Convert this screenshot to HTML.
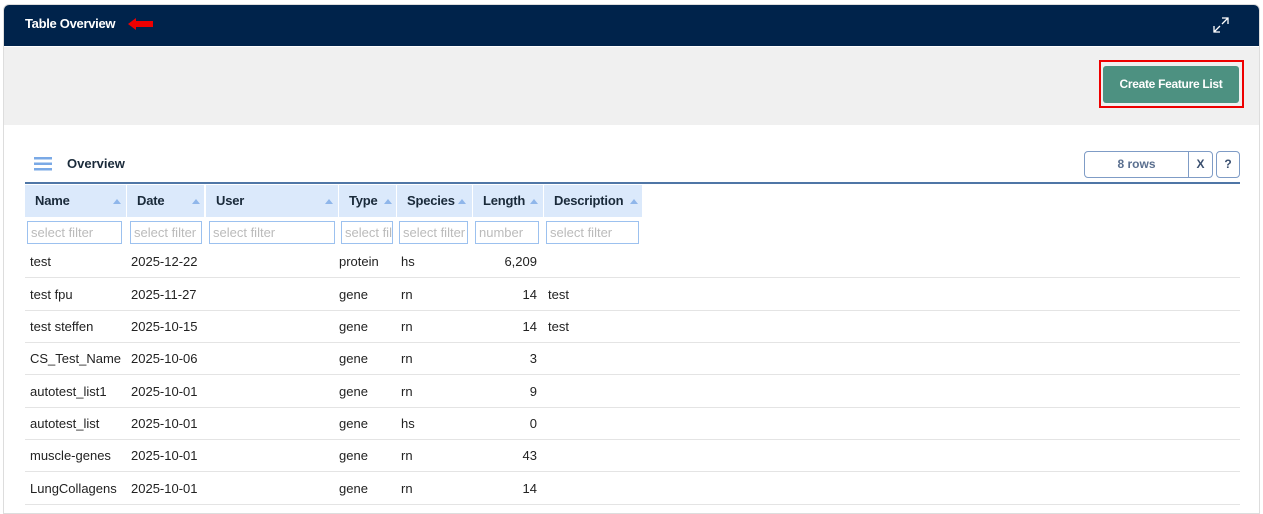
<!DOCTYPE html>
<html><head><style>
*{box-sizing:border-box;margin:0;padding:0}
body{width:1263px;height:509px;background:#fff;font-family:"Liberation Sans",sans-serif;position:relative;overflow:hidden;color:#222}
.card{position:absolute;left:3px;top:4px;width:1257px;height:510px;border:1px solid #ddd;border-radius:6px 6px 0 0;overflow:hidden;background:#fff}
.hdr{position:absolute;left:0;top:0;width:100%;height:41px;background:#00234b}
.title{position:absolute;left:21px;top:11px;color:#fff;font-weight:bold;font-size:13px;letter-spacing:-0.3px}
.gray{position:absolute;left:0;top:42px;width:100%;height:78px;background:#f0f0f0}
.btn{position:absolute;left:1103px;top:66px;width:136px;height:37px;background:#4d9181;border-radius:3px;color:#fff;font-weight:bold;font-size:12px;text-align:center;line-height:37px;letter-spacing:-0.3px}
.redbox{position:absolute;left:1099px;top:60px;width:145px;height:48px;border:2px solid #e00}
.abs{position:absolute}
.th{position:absolute;top:185px;height:32px;background:#dbe9fb;font-weight:bold;font-size:13px;line-height:32px;padding-left:10px;color:#1a2a3a;letter-spacing:-0.2px}
.tri{position:absolute;top:14px;width:0;height:0;border-left:4px solid transparent;border-right:4px solid transparent;border-bottom:5px solid #8fb6ea}
.fi{position:absolute;top:221px;height:23px;border:1px solid #9cc1ef;color:#bbb;font-size:13px;line-height:21px;padding-left:3px;overflow:hidden;white-space:nowrap;background:#fff}
.row{position:absolute;left:25px;width:1215px;height:32px;border-bottom:1px solid #e4e4e4;font-size:13px}
.row span{position:absolute;top:8px;white-space:nowrap}
</style></head><body>
<div class="card">
<div class="hdr"></div>
<div class="title">Table Overview</div>
<svg class="abs" style="left:124px;top:13px" width="26" height="12"><polygon points="0,6 8,0 8,3 25,3 25,9 8,9 8,12" fill="#e00"/></svg>
<svg class="abs" style="left:1208px;top:11px" width="18" height="18" fill="none" stroke="#fff" stroke-width="1.3"><path d="M10 2H16V8M16 2L10 8M8 16H2V10M2 16L8 10"/></svg>
<div class="gray"></div>
</div>
<div class="btn">Create Feature List</div>
<div class="redbox"></div>
<svg class="abs" style="left:34px;top:157px" width="18" height="14"><rect y="0" width="18" height="2.5" fill="#7aa9e6"/><rect y="5.5" width="18" height="2.5" fill="#7aa9e6"/><rect y="11" width="18" height="2.5" fill="#7aa9e6"/></svg>
<div class="abs" style="left:67px;top:156px;font-weight:bold;font-size:13px;color:#1a2a3a">Overview</div>
<div class="abs" style="left:1084px;top:151px;width:105px;height:27px;border:1px solid #7f9cc6;border-radius:4px 0 0 4px;text-align:center;line-height:25px;font-size:12px;font-weight:bold;color:#5a6f8f">8 rows</div>
<div class="abs" style="left:1188px;top:151px;width:25px;height:27px;border:1px solid #7f9cc6;border-radius:0 4px 4px 0;text-align:center;line-height:25px;font-size:12px;font-weight:bold;color:#3a4f6f">X</div>
<div class="abs" style="left:1216px;top:151px;width:24px;height:27px;border:1px solid #7f9cc6;border-radius:4px;text-align:center;line-height:25px;font-size:12px;font-weight:bold;color:#3a4f6f">?</div>
<div class="abs" style="left:25px;top:182px;width:1215px;height:2px;background:#4f76a6"></div>

<div class="th" style="left:25px;width:101px">Name<i class="tri" style="left:88px"></i></div>
<div class="th" style="left:127px;width:77px">Date<i class="tri" style="left:65px"></i></div>
<div class="th" style="left:206px;width:132px">User<i class="tri" style="left:119px"></i></div>
<div class="th" style="left:339px;width:57px">Type<i class="tri" style="left:45px"></i></div>
<div class="th" style="left:397px;width:75px">Species<i class="tri" style="left:61px"></i></div>
<div class="th" style="left:473px;width:70px">Length<i class="tri" style="left:57px"></i></div>
<div class="th" style="left:544px;width:98px">Description<i class="tri" style="left:86px"></i></div>

<div class="fi" style="left:27px;width:95px">select filter</div>
<div class="fi" style="left:130px;width:72px">select filter</div>
<div class="fi" style="left:209px;width:126px">select filter</div>
<div class="fi" style="left:341px;width:52px">select filter</div>
<div class="fi" style="left:399px;width:69px">select filter</div>
<div class="fi" style="left:475px;width:64px">number</div>
<div class="fi" style="left:546px;width:93px">select filter</div>

<div class="row" style="top:246px"><span style="left:5px">test</span><span style="left:106px">2025-12-22</span><span style="left:314px">protein</span><span style="left:376px">hs</span><span style="right:703px">6,209</span></div>
<div class="row" style="top:279px"><span style="left:5px">test fpu</span><span style="left:106px">2025-11-27</span><span style="left:314px">gene</span><span style="left:376px">rn</span><span style="right:703px">14</span><span style="left:523px">test</span></div>
<div class="row" style="top:311px"><span style="left:5px">test steffen</span><span style="left:106px">2025-10-15</span><span style="left:314px">gene</span><span style="left:376px">rn</span><span style="right:703px">14</span><span style="left:523px">test</span></div>
<div class="row" style="top:343px"><span style="left:5px">CS_Test_Name</span><span style="left:106px">2025-10-06</span><span style="left:314px">gene</span><span style="left:376px">rn</span><span style="right:703px">3</span></div>
<div class="row" style="top:376px"><span style="left:5px">autotest_list1</span><span style="left:106px">2025-10-01</span><span style="left:314px">gene</span><span style="left:376px">rn</span><span style="right:703px">9</span></div>
<div class="row" style="top:408px"><span style="left:5px">autotest_list</span><span style="left:106px">2025-10-01</span><span style="left:314px">gene</span><span style="left:376px">hs</span><span style="right:703px">0</span></div>
<div class="row" style="top:440px"><span style="left:5px">muscle-genes</span><span style="left:106px">2025-10-01</span><span style="left:314px">gene</span><span style="left:376px">rn</span><span style="right:703px">43</span></div>
<div class="row" style="top:473px"><span style="left:5px">LungCollagens</span><span style="left:106px">2025-10-01</span><span style="left:314px">gene</span><span style="left:376px">rn</span><span style="right:703px">14</span></div>
</body></html>
